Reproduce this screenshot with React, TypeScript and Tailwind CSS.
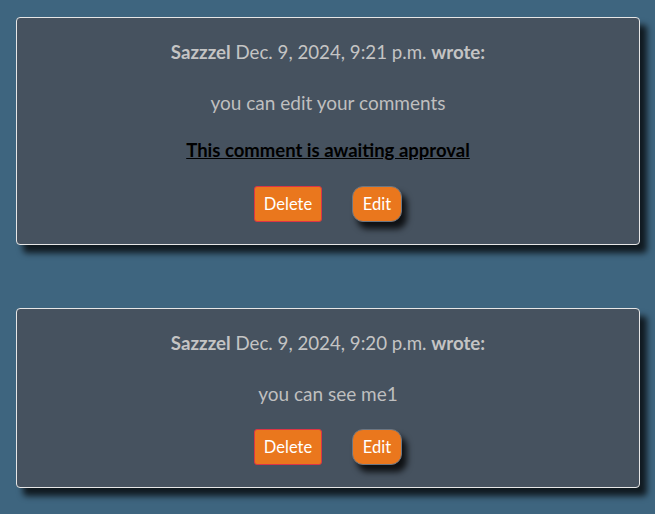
type Comment = {
  author: string;
  date: string;
  body: string;
  pending?: boolean;
};

const comments: Comment[] = [
  {
    author: "Sazzzel",
    date: "Dec. 9, 2024, 9:21 p.m.",
    body: "you can edit your comments",
    pending: true,
  },
  {
    author: "Sazzzel",
    date: "Dec. 9, 2024, 9:20 p.m.",
    body: "you can see me1",
  },
];

function CommentCard({ comment }: { comment: Comment }) {
  return (
    <div className="w-[624px] rounded-[4px] border border-[#e6e6e6] bg-[#46525f] px-4 pt-[21px] pb-[22px] text-center shadow-[7px_8px_6px_rgba(0,0,0,0.75)]">
      <p className="mb-[23px] text-[18.7px] leading-[27px] text-[#c4c4c4]">
        <strong className="font-bold">{comment.author}</strong> {comment.date}{" "}
        <strong className="font-bold">wrote:</strong>
      </p>
      <p
        className={`text-[19px] leading-[27px] text-[#bfbfbf] ${
          comment.pending ? "mb-[21px]" : "mb-[22px]"
        }`}
      >
        {comment.body}
      </p>
      {comment.pending && (
        <p className="mb-[22px] text-[18.5px] leading-[27px] font-bold text-black underline">
          This comment is awaiting approval
        </p>
      )}
      <div className="flex justify-center gap-[30px]">
        <button className="h-9 w-[68px] rounded-[3px] border border-[#dc3545] bg-[#ea771d] text-[16.5px] text-white">
          Delete
        </button>
        <button className="h-9 w-[50px] rounded-[11px] border border-[#6c7682] bg-[#ea771d] text-[16.5px] text-white shadow-[5px_7px_6px_rgba(0,0,0,0.8)]">
          Edit
        </button>
      </div>
    </div>
  );
}

export default function App() {
  return (
    <main
      className="min-h-[514px] bg-[#3e657f] pt-[17px] pl-4"
      style={{ fontFamily: "Lato, 'Noto Sans', sans-serif" }}
    >
      <div className="flex flex-col gap-[63px]">
        {comments.map((c, i) => (
          <CommentCard key={i} comment={c} />
        ))}
      </div>
    </main>
  );
}
